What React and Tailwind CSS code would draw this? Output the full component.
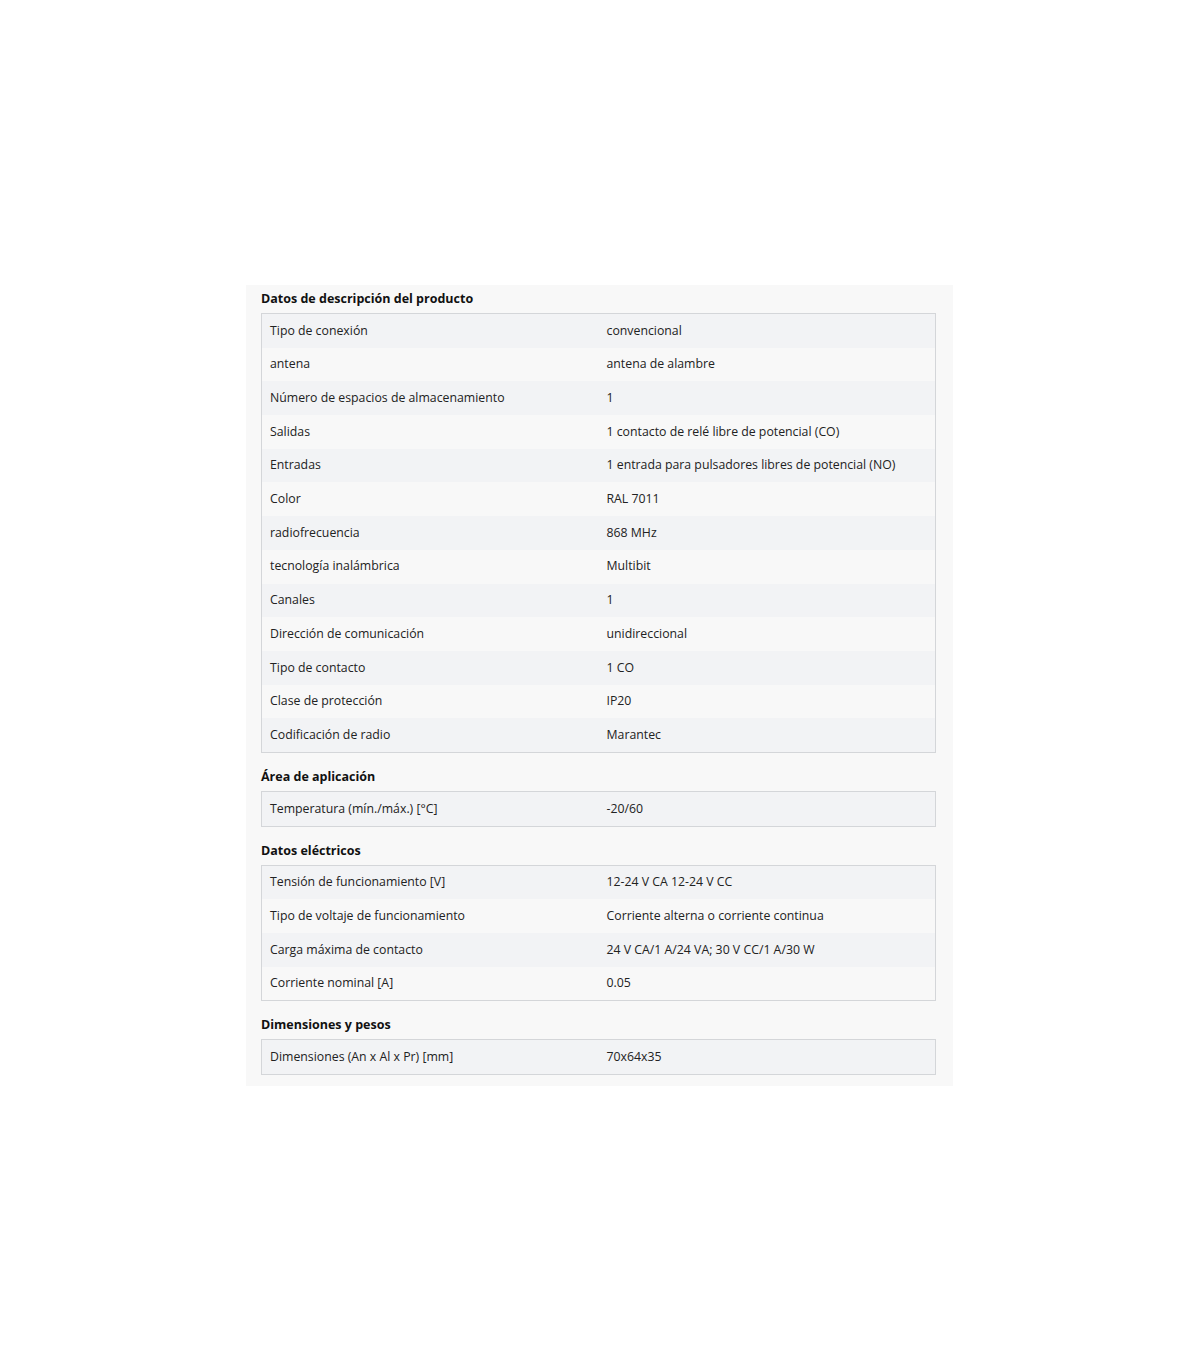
const sections = [
  {
    title: 'Datos de descripción del producto',
    rows: [
      ['Tipo de conexión', 'convencional'],
      ['antena', 'antena de alambre'],
      ['Número de espacios de almacenamiento', '1'],
      ['Salidas', '1 contacto de relé libre de potencial (CO)'],
      ['Entradas', '1 entrada para pulsadores libres de potencial (NO)'],
      ['Color', 'RAL 7011'],
      ['radiofrecuencia', '868 MHz'],
      ['tecnología inalámbrica', 'Multibit'],
      ['Canales', '1'],
      ['Dirección de comunicación', 'unidireccional'],
      ['Tipo de contacto', '1 CO'],
      ['Clase de protección', 'IP20'],
      ['Codificación de radio', 'Marantec'],
    ],
  },
  {
    title: 'Área de aplicación',
    rows: [['Temperatura (mín./máx.) [°C]', '-20/60']],
  },
  {
    title: 'Datos eléctricos',
    rows: [
      ['Tensión de funcionamiento [V]', '12-24 V CA 12-24 V CC'],
      ['Tipo de voltaje de funcionamiento', 'Corriente alterna o corriente continua'],
      ['Carga máxima de contacto', '24 V CA/1 A/24 VA; 30 V CC/1 A/30 W'],
      ['Corriente nominal [A]', '0.05'],
    ],
  },
  {
    title: 'Dimensiones y pesos',
    rows: [['Dimensiones (An x Al x Pr) [mm]', '70x64x35']],
  },
]

function SpecTable({ title, rows }) {
  return (
    <div className="mt-[15px] first:mt-0">
      <h3 className="h-[18px] leading-[18px] text-[12.5px] font-bold text-[#111] mb-[5px]">{title}</h3>
      <div className="border border-[#d4d6d9]">
        {rows.map(([label, value], i) => (
          <div key={label}
            className={`grid grid-cols-2 h-[33.7px] items-center ${i % 2 === 0 ? 'bg-[#f2f3f5]' : 'bg-[#f8f8f8]'}`}>
            <div className="px-2 text-[12.3px] text-[#222]">{label}</div>
            <div className="px-2 text-[12.3px] text-[#222]">{value}</div>
          </div>
        ))}
      </div>
    </div>
  )
}

export default function App() {
  return (
    <div className="w-[1200px] h-[1372px] bg-white pt-[285px]"
      style={{ fontFamily: '"Open Sans", "Noto Sans", sans-serif' }}>
      <div className="ml-[246px] w-[707px] bg-[#f8f8f8] pl-[15px] pr-[17px] pt-[5px] pb-[11px]">
        {sections.map(s => <SpecTable key={s.title} title={s.title} rows={s.rows} />)}
      </div>
    </div>
  )
}
